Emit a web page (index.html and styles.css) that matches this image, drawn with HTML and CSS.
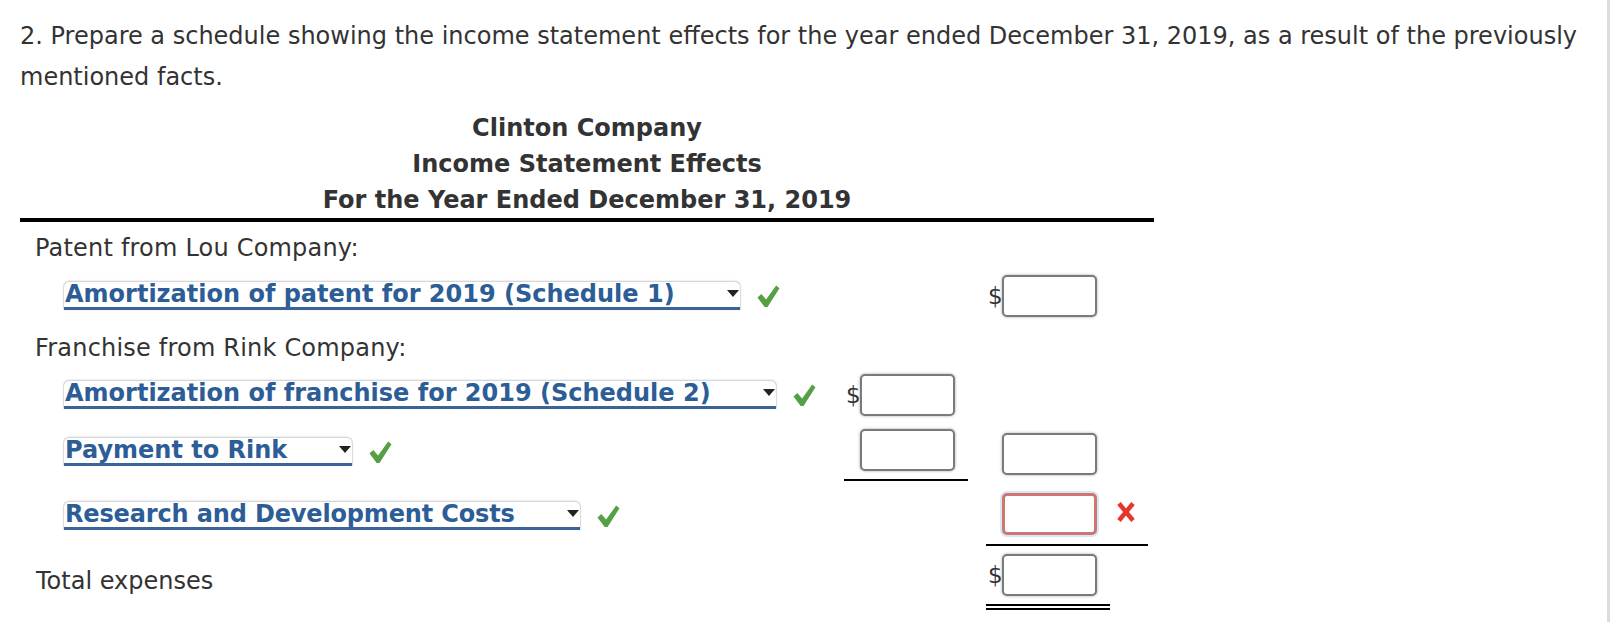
FILE: index.html
```html
<!DOCTYPE html>
<html>
<head>
<meta charset="utf-8">
<title>Income Statement Effects</title>
<link rel="stylesheet" href="styles.css">
</head>
<body>
<div class="page">
  <p class="intro">2. Prepare a schedule showing the income statement effects for the year ended December 31, 2019, as a result of the previously mentioned facts.</p>

  <div class="statement">
    <div class="heading">
      <div>Clinton Company</div>
      <div>Income Statement Effects</div>
      <div>For the Year Ended December 31, 2019</div>
    </div>

    <div class="row row-a">
      <div class="label">Patent from Lou Company:</div>
    </div>

    <div class="row row-b">
      <div class="desc">
        <div class="select w-patent"><span class="sel-text">Amortization of patent for 2019 (Schedule 1)</span><svg class="arrow" viewBox="0 0 12 7"><path d="M0 0H12L6 7Z"/></svg></div>
        <svg class="check" viewBox="0 0 24 24"><path d="M0.5 13L4.5 9.5L9.5 15L20 0.5L23.5 3.5L11 23L8 23Z"/></svg>
      </div>
      <div class="cell c2"><span class="dollar">$</span><span class="input"></span></div>
    </div>

    <div class="row row-c">
      <div class="label">Franchise from Rink Company:</div>
    </div>

    <div class="row row-d">
      <div class="desc">
        <div class="select w-franchise"><span class="sel-text">Amortization of franchise for 2019 (Schedule 2)</span><svg class="arrow" viewBox="0 0 12 7"><path d="M0 0H12L6 7Z"/></svg></div>
        <svg class="check" viewBox="0 0 24 24"><path d="M0.5 13L4.5 9.5L9.5 15L20 0.5L23.5 3.5L11 23L8 23Z"/></svg>
      </div>
      <div class="cell c1"><span class="dollar">$</span><span class="input"></span></div>
    </div>

    <div class="row row-e">
      <div class="desc desc-e">
        <div class="select w-payment"><span class="sel-text">Payment to Rink</span><svg class="arrow" viewBox="0 0 12 7"><path d="M0 0H12L6 7Z"/></svg></div>
        <svg class="check" viewBox="0 0 24 24"><path d="M0.5 13L4.5 9.5L9.5 15L20 0.5L23.5 3.5L11 23L8 23Z"/></svg>
      </div>
      <div class="cell c1 subtotal"><span class="dollar"></span><span class="input"></span></div>
      <div class="cell c2 c2-e"><span class="dollar"></span><span class="input"></span></div>
    </div>

    <div class="row row-f">
      <div class="desc desc-f">
        <div class="select w-research"><span class="sel-text">Research and Development Costs</span><svg class="arrow" viewBox="0 0 12 7"><path d="M0 0H12L6 7Z"/></svg></div>
        <svg class="check" viewBox="0 0 24 24"><path d="M0.5 13L4.5 9.5L9.5 15L20 0.5L23.5 3.5L11 23L8 23Z"/></svg>
      </div>
      <div class="cell c2-wide subtotal-f"><span class="dollar"></span><span class="input wrong"></span><svg class="cross" viewBox="0 0 20 20"><path d="M3 1.5L17 18.5M17 1.5L3 18.5"/></svg></div>
    </div>

    <div class="row row-g">
      <div class="label label-total">Total expenses</div>
      <div class="cell c2 total"><span class="dollar">$</span><span class="input"></span></div>
    </div>
  </div>
</div>
</body>
</html>
```

FILE: styles.css
```css
html, body {
  margin: 0;
  padding: 0;
  background: #ffffff;
}

body {
  font-family: "DejaVu Sans", Verdana, sans-serif;
  color: #333333;
}

.page {
  box-sizing: border-box;
  width: 1610px;
  height: 622px;
  padding: 16px 0 0 20px;
  border-right: 3px solid #dcdcdc;
  overflow: hidden;
}

.intro {
  margin: 0;
  font-size: 24px;
  line-height: 41px;
  width: 1580px;
}

.statement {
  width: 1134px;
  margin-top: 12px;
  display: flex;
  flex-direction: column;
}

.heading {
  font-weight: bold;
  font-size: 24px;
  line-height: 36px;
  text-align: center;
  border-bottom: 4px solid #000000;
}

.row {
  display: grid;
  grid-template-columns: 824px 124px 18px 124px 38px;
  align-items: center;
}

.label {
  grid-column: 1;
  font-size: 24px;
  line-height: 30px;
  padding-left: 15px;
  letter-spacing: 0.2px;
}

.row-a { margin-top: 11px; }
.row-b { margin-top: 12px; height: 42px; }
.row-c { margin-top: 16px; }
.row-d { margin-top: 11px; height: 42px; }
.row-e { margin-top: 13px; align-items: start; }
.row-f { margin-top: 12px; align-items: start; }
.row-g { margin-top: 8px; align-items: start; }

.desc {
  grid-column: 1;
  display: flex;
  align-items: center;
  gap: 17px;
  padding-left: 44px;
}

.desc-e { margin-top: 9px; }
.desc-f { margin-top: 9px; }

.select {
  box-sizing: border-box;
  height: 28px;
  display: flex;
  justify-content: space-between;
  align-items: flex-start;
  background: #ffffff;
  border-radius: 5px 5px 0 0;
  border-bottom: 3px solid #3a6495;
  box-shadow: 0 -1px 2px rgba(0, 0, 0, 0.2), -1px 0 1px rgba(0, 0, 0, 0.1), 1px 0 1px rgba(0, 0, 0, 0.1);
  padding-left: 1px;
  padding-right: 1px;
}

.w-patent { width: 676px; }
.w-franchise { width: 712px; }
.w-payment { width: 288px; }
.w-research { width: 516px; }

.sel-text {
  font-weight: bold;
  font-size: 24px;
  line-height: 25px;
  color: #2c5d96;
  white-space: nowrap;
}

.w-research .sel-text {
  letter-spacing: -0.15px;
}

.arrow {
  width: 12px;
  height: 7px;
  margin-top: 8px;
  fill: #222222;
  flex: none;
}

.check {
  width: 23px;
  height: 23px;
  fill: #54a042;
  flex: none;
}

.cell {
  display: flex;
  align-items: center;
  padding-left: 2px;
}

.c1 { grid-column: 2; }
.c2 { grid-column: 4; }
.c2-wide { grid-column: 4 / 6; }

.dollar {
  width: 14px;
  flex: none;
  font-size: 23px;
  line-height: 30px;
  color: #333333;
  white-space: nowrap;
}

.input {
  box-sizing: border-box;
  width: 95px;
  height: 42px;
  flex: none;
  background: #ffffff;
  border: 2px solid #7a7a7a;
  border-radius: 5px;
  box-shadow: 0 0 3px rgba(0, 0, 0, 0.35);
}

.input.wrong {
  border: 3px solid #cf7670;
  box-shadow: 0 0 0 2px #d6e7f8;
}

.subtotal {
  padding-bottom: 8px;
  border-bottom: 2px solid #000000;
}

.c2-e { margin-top: 4px; }

.subtotal-f {
  width: 160px;
  padding-bottom: 9px;
  border-bottom: 2px solid #000000;
}

.cross {
  width: 20px;
  height: 20px;
  margin-left: 19px;
  margin-top: -4px;
  stroke: #e8352b;
  stroke-width: 4.5;
  fill: none;
  flex: none;
}

.label-total {
  margin-top: 12px;
  padding-left: 16px;
  letter-spacing: 0;
}

.total {
  padding-bottom: 8px;
  border-bottom: 6px double #000000;
}
```
